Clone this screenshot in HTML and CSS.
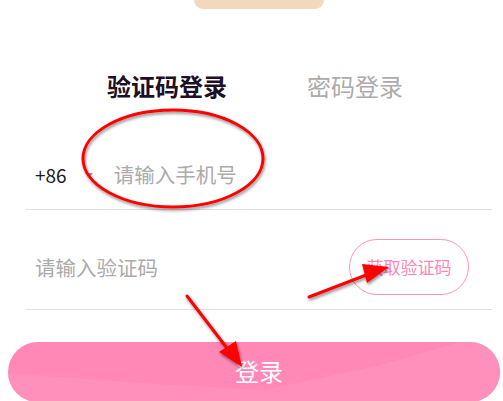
FILE: index.html
```html
<!DOCTYPE html>
<html>
<head>
    <title>登录</title>
    <link rel="stylesheet" href="styles.css">
</head>
<body>
    <div class="page">
        <div class="top-bar"></div>
        <div class="tabs">
            <span class="tab active">验证码登录</span>
            <span class="tab">密码登录</span>
        </div>
        <div class="form">
            <div class="row phone-row">
                <span class="area">+86</span>
                <span class="caret"></span>
                <span class="placeholder">请输入手机号</span>
            </div>
            <div class="row code-row">
                <span class="placeholder">请输入验证码</span>
                <button class="get-code">获取验证码</button>
            </div>
        </div>
        <button class="login">登录</button>

        <svg class="marks" width="503" height="401" viewBox="0 0 503 401">
            <defs>
                <filter id="shadow" x="-20%" y="-20%" width="140%" height="140%">
                    <feDropShadow dx="1" dy="2" stdDeviation="1.5" flood-color="#000" flood-opacity="0.45"/>
                </filter>
            </defs>
            <g filter="url(#shadow)" fill="none" stroke="#f00" stroke-width="3">
                <ellipse cx="173" cy="158.5" rx="90" ry="48.5"/>
                <line x1="187" y1="296" x2="230" y2="352" stroke-linecap="round"/>
                <line x1="309" y1="297" x2="374" y2="272" stroke-linecap="round"/>
            </g>
            <g filter="url(#shadow)" fill="#f00">
                <polygon points="242,367 219,352 236,341"/>
                <polygon points="389,267 367,283 362,264"/>
            </g>
        </svg>
    </div>
</body>
</html>
```
FILE: styles.css
```css
body {
    margin: 0;
    background: #fff;
    font-family: "Noto Sans CJK SC", "Noto Sans", sans-serif;
}

.page {
    position: relative;
    width: 503px;
    height: 401px;
    overflow: hidden;
}

.top-bar {
    margin-left: 194px;
    width: 130px;
    height: 9px;
    background: #f2d8bc;
    border-radius: 0 0 10px 10px;
}

.tabs {
    display: flex;
    padding-top: 62px;
    padding-left: 107px;
    gap: 80px;
    line-height: 30px;
    font-size: 24px;
}

.tab {
    color: #ababab;
}

.tab.active {
    color: #1d1025;
    font-weight: bold;
}

.form {
    margin: 38px 11px 0 26px;
}

.row {
    display: flex;
    align-items: center;
    border-bottom: 1px solid #e1dee6;
    box-sizing: border-box;
}

.phone-row {
    height: 71px;
    padding-left: 9px;
}

.area {
    font-size: 19px;
    color: #1a1a1a;
}

.caret {
    width: 0;
    height: 0;
    margin: 2px 0 0 20px;
    border-left: 3px solid transparent;
    border-right: 3px solid transparent;
    border-top: 4px solid #999;
}

.placeholder {
    font-size: 20.5px;
    color: #ababab;
}

.phone-row .placeholder {
    margin-left: 21px;
}

.code-row {
    height: 100px;
    padding: 14px 0 0 9px;
    justify-content: space-between;
}

.get-code {
    width: 120px;
    height: 56px;
    margin-right: 23px;
    border: 1.5px solid #ff90b9;
    border-radius: 28px;
    background: #fff;
    color: #ff86b3;
    font-family: inherit;
    font-size: 17px;
    padding: 0;
}

.login {
    position: relative;
    display: block;
    margin: 32px 0 0 8px;
    width: 492px;
    height: 60px;
    border: none;
    border-radius: 30px;
    background: #ff88b6;
    color: #fff;
    font-family: inherit;
    font-size: 24px;
    padding: 0 0 4px 10px;
    overflow: hidden;
}

.login::after {
    content: "";
    position: absolute;
    inset: 0;
    background: #ff94bd;
    clip-path: polygon(0 52%, 30% 70%, 52% 80%, 75% 40%, 92% 0, 100% 0, 100% 100%, 0 100%);
    opacity: 0.7;
}

.marks {
    position: absolute;
    left: 0;
    top: 0;
    pointer-events: none;
}
```
